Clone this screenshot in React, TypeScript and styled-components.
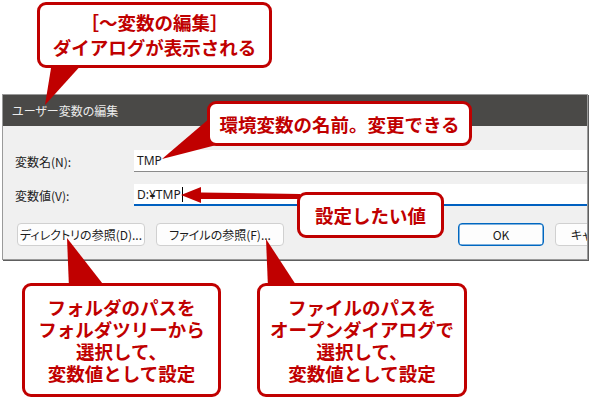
import styled, { createGlobalStyle } from 'styled-components';

const GlobalStyle = createGlobalStyle`
  html, body {
    margin: 0;
    padding: 0;
    background: #ffffff;
  }
  body {
    font-family: "Noto Sans CJK JP", "Noto Sans", sans-serif;
  }
`

const RED = '#c00000';

const Stage = styled.div`
  position: relative;
  width: 590px;
  height: 399px;
  overflow: hidden;
  background: #ffffff;
`

const Dialog = styled.div`
  box-sizing: border-box;
  margin: 94px 0 0 2px;
  width: 586px;
  height: 166px;
  border: 1px solid #9a9a9a;
  box-shadow: 1px 1px 0 #5e5e5e;
  background: #f0f0f0;
  overflow: hidden;
  display: flex;
  flex-direction: column;
  font-feature-settings: "palt";
`

const TitleBar = styled.div`
  height: 31px;
  background: #4a4947;
  color: #ececec;
  font-size: 12px;
  display: flex;
  align-items: center;
  padding-left: 9px;
`

const Body = styled.div`
  display: flex;
  flex-direction: column;
  padding: 24px 0 0 12px;
  gap: 12px;
`

const FieldRow = styled.div`
  display: grid;
  grid-template-columns: 119px 1fr;
  align-items: center;
  height: 22px;
`

const Label = styled.div`
  font-size: 12px;
  color: #1b1b1b;
`

const Field = styled.div<{ $focused?: boolean }>`
  box-sizing: border-box;
  height: 22px;
  background: #ffffff;
  border-bottom: ${(p) => (p.$focused ? '2px solid #0060c0' : '1px solid #8a8a8a')};
  display: flex;
  align-items: center;
  padding-left: 3px;
  font-family: "Noto Sans", "Noto Sans CJK JP", sans-serif;
  font-size: 12px;
  color: #1b1b1b;
`

const Caret = styled.span`
  display: inline-block;
  width: 1px;
  height: 15px;
  background: #000;
  margin-left: 1px;
`

const ButtonRow = styled.div`
  display: flex;
  align-items: center;
  margin-top: 5px;
  padding-left: 2px;
  gap: 11px;
`

const Button = styled.div<{ $primary?: boolean; $push?: number }>`
  box-sizing: border-box;
  flex: none;
  width: ${(p) => (p.$primary !== undefined ? '86px' : '128px')};
  height: 23px;
  margin-left: ${(p) => (p.$push ? `${p.$push}px` : '0')};
  border: 1px solid ${(p) => (p.$primary ? '#0067c0' : '#d0d0d0')};
  box-shadow: ${(p) => (p.$primary ? 'inset 0 0 0 0.5px #0067c0' : 'none')};
  border-radius: 4px;
  background: #fdfdfd;
  display: flex;
  align-items: center;
  justify-content: center;
  font-size: 12px;
  color: #1b1b1b;
  white-space: nowrap;
`

const Tails = styled.svg`
  position: absolute;
  left: 0;
  top: 0;
  pointer-events: none;
`

const Callout = styled.div<{ $x: number; $y: number; $w: number; $h: number }>`
  position: absolute;
  left: ${(p) => p.$x}px;
  top: ${(p) => p.$y}px;
  width: ${(p) => p.$w}px;
  height: ${(p) => p.$h}px;
  box-sizing: border-box;
  border: 3px solid ${RED};
  border-radius: 9px;
  background: #ffffff;
  display: flex;
  flex-direction: column;
  align-items: center;
  justify-content: center;
  color: ${RED};
  font-family: "Noto Sans CJK JP", sans-serif;
  font-weight: 700;
  font-size: 18.5px;
  line-height: 22px;
  text-align: center;
  white-space: nowrap;
`

const Line = styled.div<{ $lh?: number }>`
  height: ${(p) => (p.$lh ? `${p.$lh}px` : '22px')};
  line-height: ${(p) => (p.$lh ? `${p.$lh}px` : '22px')};
`

const App = () => {
  return (
    <Stage>
      <GlobalStyle />
      <Dialog>
        <TitleBar>ユーザー変数の編集</TitleBar>
        <Body>
          <FieldRow>
            <Label>変数名(N):</Label>
            <Field>TMP</Field>
          </FieldRow>
          <FieldRow>
            <Label>変数値(V):</Label>
            <Field $focused>
              D:¥TMP<Caret />
            </Field>
          </FieldRow>
          <ButtonRow>
            <Button>ディレクトリの参照(D)...</Button>
            <Button>ファイルの参照(F)...</Button>
            <Button $primary $push={163}>OK</Button>
            <Button $primary={false}>キャンセル</Button>
          </ButtonRow>
        </Body>
      </Dialog>

      <Tails width="590" height="399" viewBox="0 0 590 399">
        <polygon points="52,62 84,62 45,105" fill={RED} />
        <polygon points="210,118 228,142 162,159" fill={RED} />
        <polygon points="181,195 201,187 201,192.5 300,194 300,199 201,199 201,203" fill={RED} />
        <polygon points="69,288 106,288 67,238" fill={RED} />
        <polygon points="268,288 298,288 266,239" fill={RED} />
      </Tails>

      <Callout $x={37} $y={2} $w={235} $h={66}>
        <Line $lh={25}>［～変数の編集］</Line>
        <Line $lh={25}>ダイアログが表示される</Line>
      </Callout>
      <Callout $x={207} $y={101} $w={265} $h={45}>
        <Line>環境変数の名前。変更できる</Line>
      </Callout>
      <Callout $x={297} $y={192} $w={147} $h={46}>
        <Line>設定したい値</Line>
      </Callout>
      <Callout $x={22} $y={283} $w={199} $h={114}>
        <Line>フォルダのパスを</Line>
        <Line>フォルダツリーから</Line>
        <Line>選択して、</Line>
        <Line>変数値として設定</Line>
      </Callout>
      <Callout $x={257} $y={283} $w={210} $h={114}>
        <Line>ファイルのパスを</Line>
        <Line>オープンダイアログで</Line>
        <Line>選択して、</Line>
        <Line>変数値として設定</Line>
      </Callout>
    </Stage>
  );
}

export default App;
